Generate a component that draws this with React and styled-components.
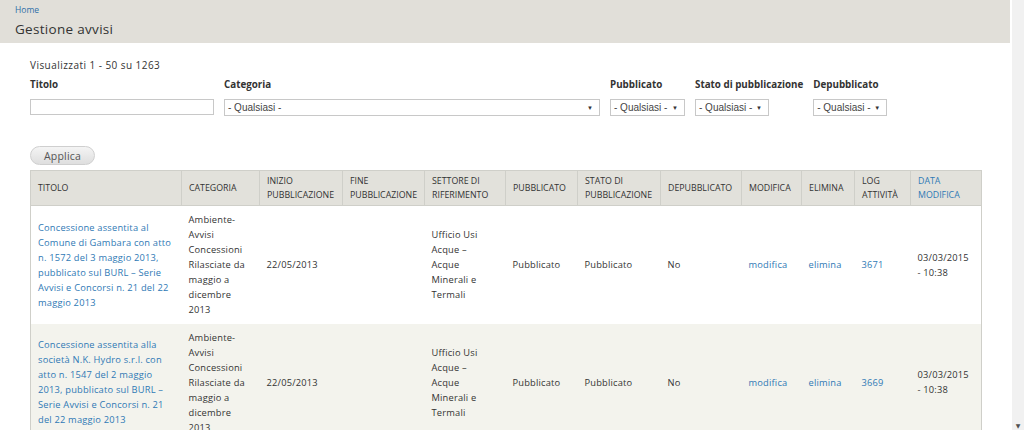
import styled, { createGlobalStyle } from "styled-components";

const GlobalStyle = createGlobalStyle`
    body {
        margin: 0;
        font-family: "Open Sans", "DejaVu Sans", sans-serif;
        color: #333;
        background: #fff;
        overflow: hidden;
    }
`;

const columns = [
    { label: "TITOLO", width: 151 },
    { label: "CATEGORIA", width: 78 },
    { label: "INIZIO PUBBLICAZIONE", width: 83 },
    { label: "FINE PUBBLICAZIONE", width: 82 },
    { label: "SETTORE DI RIFERIMENTO", width: 81 },
    { label: "PUBBLICATO", width: 72 },
    { label: "STATO DI PUBBLICAZIONE", width: 83 },
    { label: "DEPUBBLICATO", width: 81 },
    { label: "MODIFICA", width: 60 },
    { label: "ELIMINA", width: 53 },
    { label: "LOG ATTIVITÀ", width: 56 },
    { label: "DATA MODIFICA", width: 71, sortable: true },
];

const rows = [
    {
        title: "Concessione assentita al Comune di Gambara con atto n. 1572 del 3 maggio 2013, pubblicato sul BURL – Serie Avvisi e Concorsi n. 21 del 22 maggio 2013",
        log: "3671",
    },
    {
        title: "Concessione assentita alla società N.K. Hydro s.r.l. con atto n. 1547 del 2 maggio 2013, pubblicato sul BURL – Serie Avvisi e Concorsi n. 21 del 22 maggio 2013",
        log: "3669",
    },
];

const filters = [
    { label: "Categoria", width: 376 },
    { label: "Pubblicato", width: 75 },
    { label: "Stato di pubblicazione", width: 74 },
    { label: "Depubblicato", width: 74 },
];

export default function App() {
    return (
        <>
            <GlobalStyle />
            <Screen>
                <Page>
                    <Header>
                        <Crumb href="#">Home</Crumb>
                        <PageTitle>Gestione avvisi</PageTitle>
                    </Header>
                    <Content>
                        <Summary>Visualizzati 1 - 50 su 1263</Summary>
                        <Filters>
                            <Field>
                                <Label>Titolo</Label>
                                <TextInput type="text" />
                            </Field>
                            {filters.map((f) => (
                                <Field key={f.label}>
                                    <Label>{f.label}</Label>
                                    <Select $width={f.width}>
                                        <span>- Qualsiasi -</span>
                                        <Arrow>▼</Arrow>
                                    </Select>
                                </Field>
                            ))}
                        </Filters>
                        <Button>Applica</Button>
                        <Table>
                            <colgroup>
                                {columns.map((c) => (
                                    <col key={c.label} style={{ width: c.width }} />
                                ))}
                            </colgroup>
                            <thead>
                                <tr>
                                    {columns.map((c) => (
                                        <Th key={c.label} $sortable={c.sortable}>
                                            {c.label}
                                        </Th>
                                    ))}
                                </tr>
                            </thead>
                            <tbody>
                                {rows.map((r, i) => (
                                    <Row key={r.log} $odd={i % 2 === 1}>
                                        <Td>
                                            <CellLink href="#">{r.title}</CellLink>
                                        </Td>
                                        <Td>
                                            Ambiente-Avvisi Concessioni Rilasciate da maggio a dicembre 2013
                                        </Td>
                                        <Td>22/05/2013</Td>
                                        <Td />
                                        <Td>Ufficio Usi Acque – Acque Minerali e Termali</Td>
                                        <Td>Pubblicato</Td>
                                        <Td>Pubblicato</Td>
                                        <Td>No</Td>
                                        <Td>
                                            <CellLink href="#">modifica</CellLink>
                                        </Td>
                                        <Td>
                                            <CellLink href="#">elimina</CellLink>
                                        </Td>
                                        <Td>
                                            <CellLink href="#">{r.log}</CellLink>
                                        </Td>
                                        <Td>03/03/2015 -{"\u00a0"}10:38</Td>
                                    </Row>
                                ))}
                            </tbody>
                        </Table>
                    </Content>
                </Page>
                <ScrollBar>
                    <ScrollArrow>▼</ScrollArrow>
                </ScrollBar>
            </Screen>
        </>
    );
}

const Screen = styled.div`
    display: flex;
    width: 1024px;
    height: 430px;
    overflow: hidden;
`;
const Page = styled.div`
    width: 1010px;
    flex: none;
`;
const Header = styled.div`
    height: 43px;
    background: #e1dfd9;
    padding: 4px 15px 0;
    box-sizing: border-box;
`;
const Crumb = styled.a`
    display: block;
    font-size: 8.5px;
    line-height: 11px;
    color: #2f6fa8;
    text-decoration: none;
`;
const PageTitle = styled.h1`
    margin: 5px 0 0;
    font-size: 13.5px;
    font-weight: normal;
    letter-spacing: 0.3px;
    line-height: 18px;
    color: #333;
`;
const Content = styled.div`
    padding: 15px 29px 0 30px;
`;
const Summary = styled.div`
    font-size: 10px;
    letter-spacing: 0.45px;
    line-height: 14px;
`;
const Filters = styled.div`
    display: flex;
    gap: 10px;
    margin-top: 6px;
`;
const Field = styled.div`
    display: flex;
    flex-direction: column;
`;
const Label = styled.label`
    font-size: 9.8px;
    font-weight: bold;
    line-height: 14px;
    color: #333;
    margin-bottom: 7px;
    white-space: nowrap;
`;
const TextInput = styled.input`
    width: 184px;
    height: 16px;
    box-sizing: border-box;
    border: 1px solid #c8c8c8;
    padding: 0;
    margin: 0;
    outline: none;
`;
const Select = styled.div`
    width: ${(p) => p.$width}px;
    height: 17px;
    box-sizing: border-box;
    border: 1px solid #c8c8c8;
    display: flex;
    align-items: center;
    justify-content: space-between;
    padding: 0 6px 0 3px;
    font-family: "Liberation Sans", Arial, sans-serif;
    font-size: 10px;
    color: #444;
    white-space: nowrap;
`;
const Arrow = styled.span`
    font-size: 6px;
    color: #333;
`;
const Button = styled.button`
    display: block;
    margin-top: 30px;
    width: 65px;
    height: 19px;
    border: 1px solid #cfcfcf;
    border-radius: 10px;
    background: linear-gradient(#f4f4f4, #dedede);
    font-family: "Open Sans", sans-serif;
    font-size: 10.5px;
    letter-spacing: 0.2px;
    color: #555;
    padding: 0;
`;
const Table = styled.table`
    margin-top: 5px;
    width: 951px;
    table-layout: fixed;
    border-collapse: collapse;
    border: 1px solid #cfcfc9;
`;
const Th = styled.th`
    height: 35px;
    box-sizing: border-box;
    background: #e2e1db;
    border: 1px solid #cfcfc9;
    padding: 0 7px;
    text-align: left;
    font-size: 8.8px;
    font-weight: normal;
    line-height: 14px;
    color: ${(p) => (p.$sortable ? "#2f79b5" : "#333")};
`;
const Row = styled.tr`
    background: ${(p) => (p.$odd ? "#f3f3ed" : "#fff")};
`;
const Td = styled.td`
    height: 118px;
    box-sizing: border-box;
    padding: 6px 10px 6px 7px;
    font-size: 9.3px;
    letter-spacing: 0.2px;
    line-height: 15px;
    vertical-align: middle;
    color: #333;
`;
const CellLink = styled.a`
    color: #2f79b5;
    text-decoration: none;
`;
const ScrollBar = styled.div`
    flex: 1;
    height: 430px;
    background: #f1f1f1;
    border-left: 2px solid #fff;
    display: flex;
    align-items: flex-end;
    justify-content: center;
`;
const ScrollArrow = styled.span`
    font-size: 6px;
    line-height: 8px;
    color: #505050;
`;
